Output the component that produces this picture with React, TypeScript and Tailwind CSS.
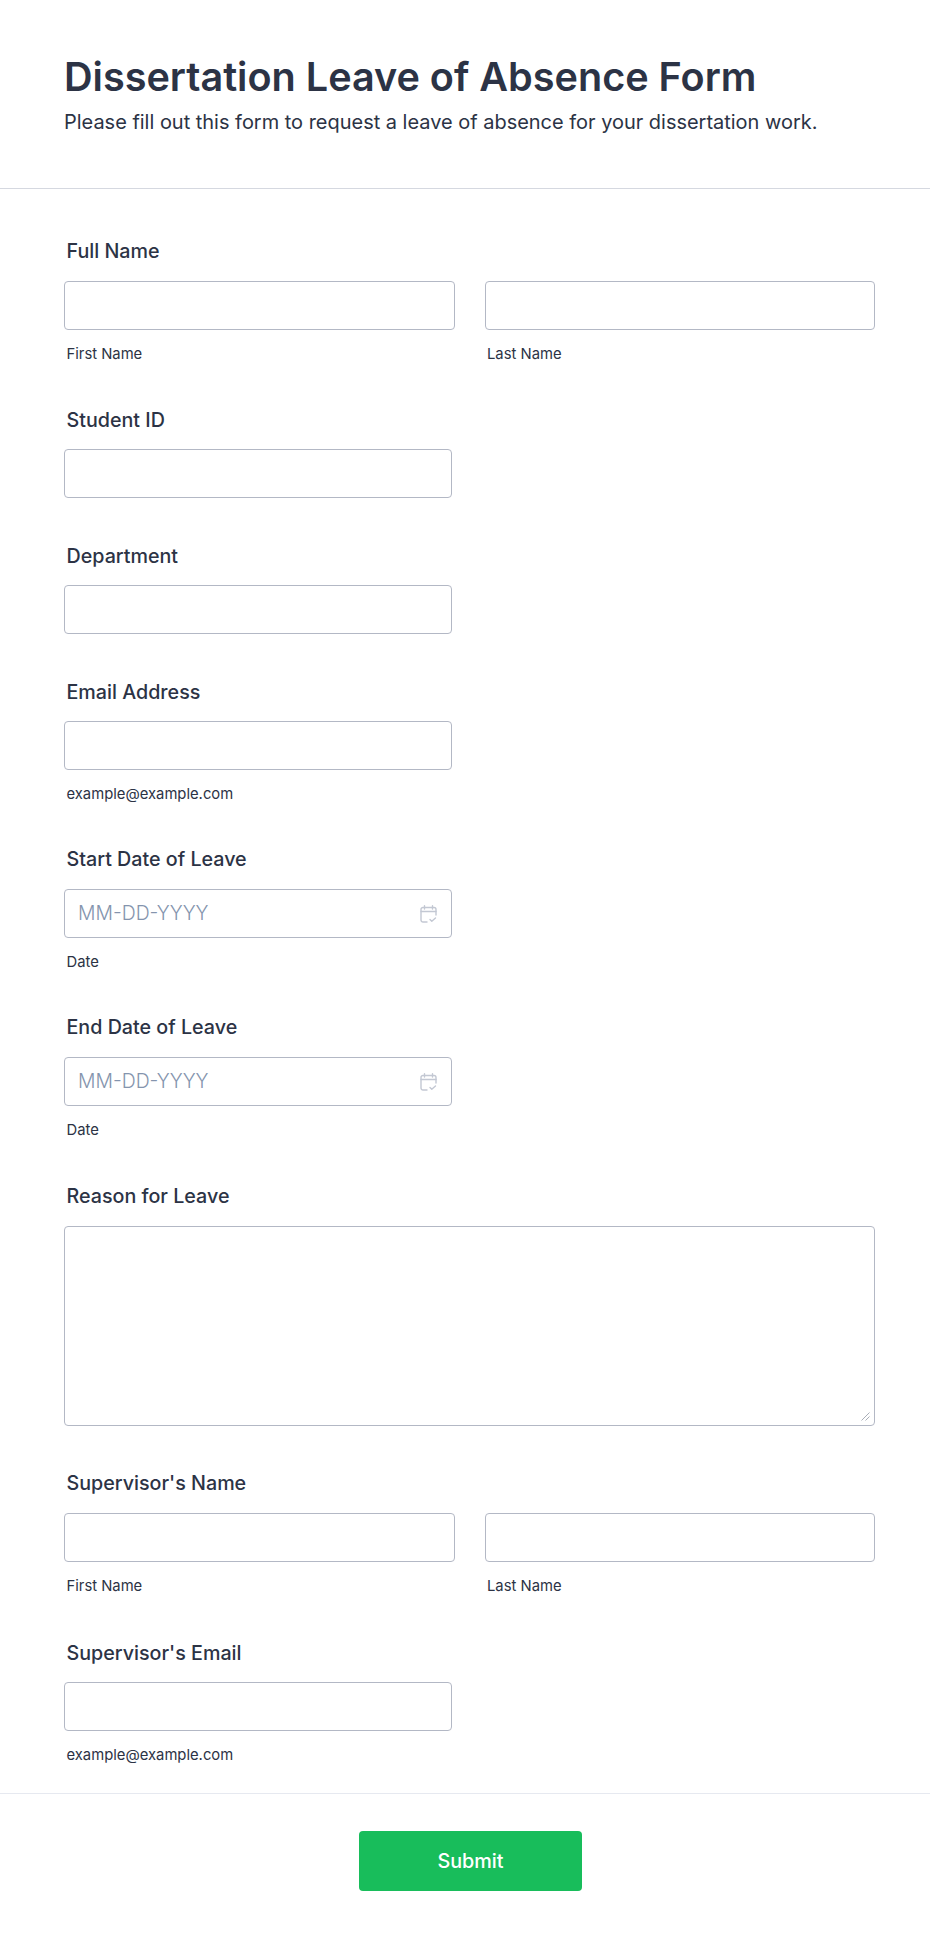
import React from "react";

const Label = ({ children, tight = false }: { children: React.ReactNode; tight?: boolean }) => (
  <div className={`pl-[2.5px] ${tight ? "pt-[1px] mb-[14px]" : "mb-[15px]"} text-[19.7px] leading-[30px] font-medium text-[#2c3345]`}>{children}</div>
);

const Sub = ({ children }: { children: React.ReactNode }) => (
  <div className="pl-[2.5px] mt-[13px] text-[14.8px] leading-[22px] text-[#2c3345]">{children}</div>
);

const Box = ({ className = "" }: { className?: string }) => (
  <div className={`h-[49px] rounded-[4px] border border-[#b3b8c5] bg-white ${className}`} />
);

const NameField = ({ label }: { label: string }) => (
  <div>
    <Label>{label}</Label>
    <div className="grid grid-cols-2 gap-[30px] w-[811px]">
      <div>
        <Box />
        <Sub>First Name</Sub>
      </div>
      <div>
        <Box />
        <Sub>Last Name</Sub>
      </div>
    </div>
  </div>
);

const TextField = ({ label, sub }: { label: string; sub?: string }) => (
  <div>
    <Label tight>{label}</Label>
    <Box className="w-[388px]" />
    {sub && <Sub>{sub}</Sub>}
  </div>
);

const CalendarIcon = () => (
  <svg width="17" height="18" viewBox="0 0 17 18" fill="none" stroke="#c3c8d3" strokeWidth="1.4" strokeLinecap="round" strokeLinejoin="round">
    <path d="M4.5 0.7V4M12.5 0.7V4" />
    <path d="M7 17H3a2 2 0 0 1-2-2V4.5a2 2 0 0 1 2-2h11a2 2 0 0 1 2 2V10" />
    <path d="M1 6.5h15" />
    <path d="M10 14.5l1.8 1.8 3.7-3.3" />
  </svg>
);

const DateField = ({ label }: { label: string }) => (
  <div>
    <Label>{label}</Label>
    <div className="h-[49px] w-[388px] rounded-[4px] border border-[#b3b8c5] bg-white flex items-center justify-between pl-[13px] pr-[14px]">
      <span className="text-[19.4px] font-light text-[#8494ad]">MM-DD-YYYY</span>
      <CalendarIcon />
    </div>
    <Sub>Date</Sub>
  </div>
);

const ResizeGrip = () => (
  <svg className="absolute right-[4px] bottom-[4px]" width="9" height="9" viewBox="0 0 9 9" fill="none" stroke="#a9aeb8" strokeWidth="1">
    <path d="M0.5 8.5L8.5 0.5M4.5 8.5L8.5 4.5" />
  </svg>
);

export default function App() {
  return (
    <div className="w-[930px] h-[1940px] bg-white font-['Inter',sans-serif] text-[#2c3345]">
      <header className="h-[189px] border-b border-[#d5d8e0] pl-[64px] pt-[53px]">
        <h1 className="text-[39.6px] leading-[48px] font-semibold text-[#2c3345]">Dissertation Leave of Absence Form</h1>
        <p className="text-[19.97px] leading-[30px] mt-[6px] text-[#2c3345]">Please fill out this form to request a leave of absence for your dissertation work.</p>
      </header>
      <main className="pl-[64px] pt-[47px] flex flex-col">
        <NameField label="Full Name" />
        <div className="mt-[39px] flex flex-col gap-[42px]">
          <TextField label="Student ID" />
          <TextField label="Department" />
        </div>
        <div className="mt-[42px]">
          <TextField label="Email Address" sub="example@example.com" />
        </div>
        <div className="mt-[39px]">
          <DateField label="Start Date of Leave" />
        </div>
        <div className="mt-[39px]">
          <DateField label="End Date of Leave" />
        </div>
        <div className="mt-[40px]">
          <Label>Reason for Leave</Label>
          <div className="relative h-[200px] w-[811px] rounded-[4px] border border-[#b3b8c5] bg-white">
            <ResizeGrip />
          </div>
        </div>
        <div className="mt-[42px]">
          <NameField label="Supervisor's Name" />
        </div>
        <div className="mt-[40px]">
          <TextField label="Supervisor's Email" sub="example@example.com" />
        </div>
      </main>
      <footer className="mt-[27px] border-t border-[#e6e9f0] pt-[37px]">
        <div className="w-[877px] pl-[64px] flex justify-center">
          <button className="w-[223px] h-[60px] pt-[1px] rounded-[4px] bg-[#18bd5b] text-white text-[19.8px] font-[450]">Submit</button>
        </div>
      </footer>
    </div>
  );
}
